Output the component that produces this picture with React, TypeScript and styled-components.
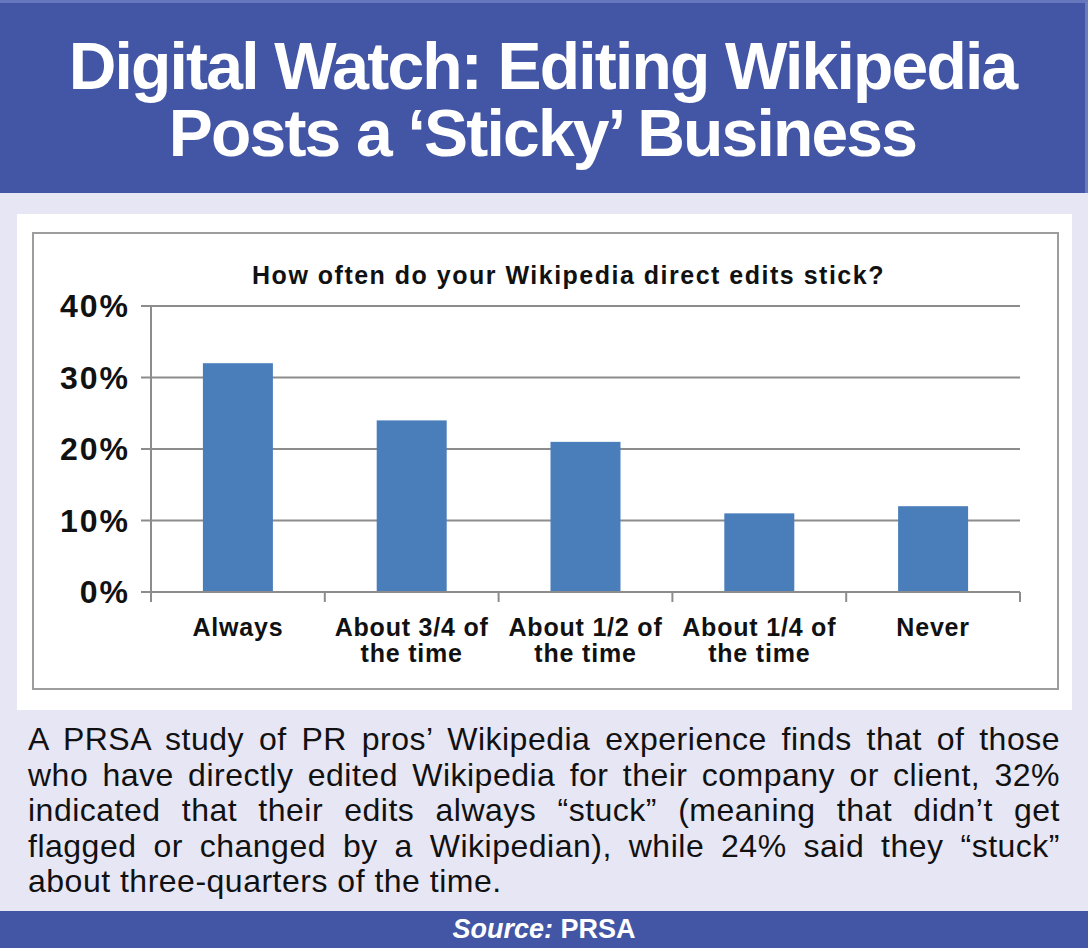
import React from 'react'
import styled, { createGlobalStyle } from 'styled-components'

const BLUE = '#4356a5'
const LAVENDER = '#e7e6f4'
const BAR = '#4a7ebb'
const GRID = '#8c8c8c'

const GlobalStyle = createGlobalStyle`
  html, body {
    margin: 0;
    padding: 0;
    background: ${LAVENDER};
  }
  * {
    box-sizing: border-box;
  }
`

const Page = styled.div`
  width: 1088px;
  height: 948px;
  display: flex;
  flex-direction: column;
  background: ${LAVENDER};
  font-family: 'Liberation Sans', Arial, sans-serif;
  overflow: hidden;
`

const Header = styled.header`
  height: 193px;
  background: ${BLUE};
  border-top: 3px solid #6677bd;
  border-right: 3px solid #6a7bc0;
  padding-top: 30px;
  text-align: center;
  color: #fff;
`

const HeadLine = styled.div`
  font-size: 66px;
  font-weight: 700;
  line-height: 67px;
  letter-spacing: -1.8px;
  white-space: nowrap;
`

const ChartCard = styled.section`
  margin: 21px 16px 0 17px;
  height: 496px;
  background: #fff;
  padding: 18px 13px 20px 15px;
`

const ChartFrame = styled.div`
  height: 100%;
  border: 2px solid #9d9d9d;
  display: flex;
  flex-direction: column;
`

const ChartTitle = styled.div`
  margin-top: 26px;
  padding-left: 46px;
  height: 30px;
  line-height: 30px;
  text-align: center;
  font-size: 25px;
  font-weight: 700;
  letter-spacing: 1.5px;
  color: #111;
`

const PlotRow = styled.div`
  margin-top: 10px;
  display: grid;
  grid-template-columns: 107px 881px;
  align-items: start;
`

const YAxis = styled.div`
  height: 322px;
  margin-top: -12px;
  padding-right: 11px;
  display: flex;
  flex-direction: column;
  justify-content: space-between;
  align-items: flex-end;
`

const YLabel = styled.div`
  line-height: 36px;
  font-size: 32px;
  font-weight: 700;
  letter-spacing: 2px;
  color: #111;
`

const XAxis = styled.div`
  margin: 4px 0 0 117px;
  width: 869px;
  display: grid;
  grid-template-columns: repeat(5, 1fr);
`

const XLabel = styled.div`
  text-align: center;
  font-size: 25px;
  font-weight: 700;
  line-height: 26px;
  letter-spacing: 0.8px;
  color: #111;
`

const Story = styled.div`
  margin-top: 12px;
  padding: 0 28px;
  font-size: 32px;
  line-height: 35.5px;
  letter-spacing: 0.5px;
  color: #111;
`

const StoryLine = styled.span<{ $last?: boolean }>`
  display: block;
  text-align: ${(p) => (p.$last ? 'left' : 'justify')};
  text-align-last: ${(p) => (p.$last ? 'left' : 'justify')};
`

const Footer = styled.footer`
  margin-top: auto;
  height: 37px;
  background: ${BLUE};
  color: #fff;
  text-align: center;
  font-size: 27px;
  font-weight: 700;
  line-height: 37px;

  em {
    font-style: italic;
  }
`

const data = [
  { label: ['Always'], value: 32 },
  { label: ['About 3/4 of', 'the time'], value: 24 },
  { label: ['About 1/2 of', 'the time'], value: 21 },
  { label: ['About 1/4 of', 'the time'], value: 11 },
  { label: ['Never'], value: 12 },
]

const ticks = ['40%', '30%', '20%', '10%', '0%']

// plot geometry, svg coords: axis at x=10, 0% at y=292, 71.5px per 10%
const AXIS_X = 10
const ZERO_Y = 292
const STEP = 71.5
const CAT_W = 173.8
const BAR_W = 70

function Plot() {
  return (
    <svg width="881" height="304" viewBox="0 0 881 304">
      {[0, 1, 2, 3, 4].map((i) => (
        <line
          key={i}
          x1={0}
          x2={879}
          y1={ZERO_Y - i * STEP}
          y2={ZERO_Y - i * STEP}
          stroke={GRID}
          strokeWidth={2}
        />
      ))}
      <line x1={AXIS_X} x2={AXIS_X} y1={ZERO_Y - 4 * STEP} y2={302} stroke={GRID} strokeWidth={2} />
      {[1, 2, 3, 4, 5].map((i) => (
        <line
          key={i}
          x1={AXIS_X + i * CAT_W}
          x2={AXIS_X + i * CAT_W}
          y1={ZERO_Y}
          y2={302}
          stroke={GRID}
          strokeWidth={2}
        />
      ))}
      {data.map((d, i) => {
        const h = d.value * (STEP / 10)
        const cx = AXIS_X + CAT_W / 2 + i * CAT_W
        return <rect key={i} x={cx - BAR_W / 2} y={ZERO_Y - h} width={BAR_W} height={h - 1} fill={BAR} />
      })}
    </svg>
  )
}

export default function App() {
  return (
    <>
      <GlobalStyle />
      <Page>
        <Header>
          <HeadLine>Digital Watch: Editing Wikipedia</HeadLine>
          <HeadLine>Posts a ‘Sticky’ Business</HeadLine>
        </Header>

        <ChartCard>
          <ChartFrame>
            <ChartTitle>How often do your Wikipedia direct edits stick?</ChartTitle>
            <PlotRow>
              <YAxis>
                {ticks.map((t) => (
                  <YLabel key={t}>{t}</YLabel>
                ))}
              </YAxis>
              <Plot />
            </PlotRow>
            <XAxis>
              {data.map((d) => (
                <XLabel key={d.label[0]}>
                  {d.label.map((l) => (
                    <div key={l}>{l}</div>
                  ))}
                </XLabel>
              ))}
            </XAxis>
          </ChartFrame>
        </ChartCard>

        <Story>
          <StoryLine>A PRSA study of PR pros’ Wikipedia experience finds that of those</StoryLine>
          <StoryLine>who have directly edited Wikipedia for their company or client, 32%</StoryLine>
          <StoryLine>indicated that their edits always “stuck” (meaning that didn’t get</StoryLine>
          <StoryLine>flagged or changed by a Wikipedian), while 24% said they “stuck”</StoryLine>
          <StoryLine $last>about three-quarters of the time.</StoryLine>
        </Story>

        <Footer>
          <em>Source:</em> PRSA
        </Footer>
      </Page>
    </>
  )
}
